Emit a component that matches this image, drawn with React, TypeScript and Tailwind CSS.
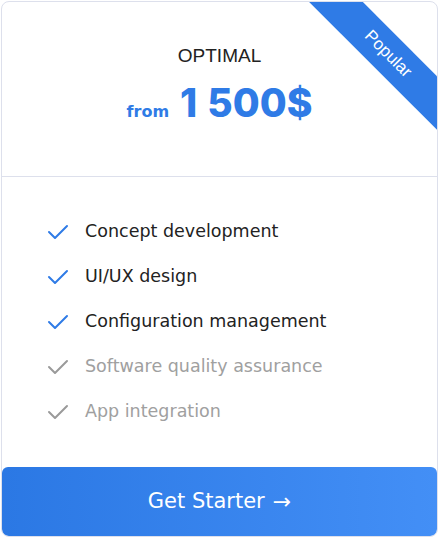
const features = [
  { label: "Concept development", on: true },
  { label: "UI/UX design", on: true },
  { label: "Configuration management", on: true },
  { label: "Software quality assurance", on: false },
  { label: "App integration", on: false },
];

function Check({ on }: { on: boolean }) {
  return (
    <svg
      width="22"
      height="18"
      viewBox="0 0 22 18"
      fill="none"
      stroke={on ? "#2f7be6" : "#9a9a9a"}
      strokeWidth="2"
      strokeLinecap="round"
      strokeLinejoin="round"
    >
      <polyline points="2,9 8,15 20,3" />
    </svg>
  );
}

export default function App() {
  return (
    <div className="bg-white p-px">
      <div className="relative flex h-[536px] w-full flex-col overflow-hidden rounded-lg border border-[#dde0ec] bg-white">
        <div
          className="absolute left-[266px] top-[33px] flex h-[38px] w-[240px] rotate-45 items-center justify-center bg-[#2f7be6] text-[17px] text-white"
          style={{ fontFamily: "'Liberation Sans', Arial, sans-serif" }}
        >
          Popular
        </div>

        <div className="flex h-[175px] shrink-0 flex-col items-center border-b border-[#dde0ec] pt-[42px]">
          <p
            className="text-[19px] leading-6 text-[#222]"
            style={{ fontFamily: "'Liberation Sans', Arial, sans-serif" }}
          >
            OPTIMAL
          </p>
          <div className="mt-[15px] flex items-baseline gap-[11px] text-[#2f7be6]">
            <span className="text-[16px] font-bold" style={{ fontFamily: "'DejaVu Sans', sans-serif" }}>
              from
            </span>
            <span className="text-[39px] font-extrabold leading-none" style={{ fontFamily: "Inter, sans-serif" }}>
              <span className="mr-[10px]">1</span>500$
            </span>
          </div>
        </div>

        <ul className="flex flex-col gap-[22px] pl-[45px] pt-[43px]" style={{ fontFamily: "'DejaVu Sans', sans-serif" }}>
          {features.map((f) => (
            <li key={f.label} className="flex h-[23px] items-center gap-[16px]">
              <Check on={f.on} />
              <span className={`text-[17.5px] ${f.on ? "text-[#222]" : "text-[#a0a0a0]"}`}>{f.label}</span>
            </li>
          ))}
        </ul>

        <button
          className="mt-auto flex h-[69px] w-full items-center justify-center gap-2 rounded-md bg-gradient-to-r from-[#2b78e4] to-[#438ff6] text-[21px] text-white"
          style={{ fontFamily: "'DejaVu Sans', sans-serif" }}
        >
          Get Starter <span className="text-[22px]">→</span>
        </button>
      </div>
    </div>
  );
}
